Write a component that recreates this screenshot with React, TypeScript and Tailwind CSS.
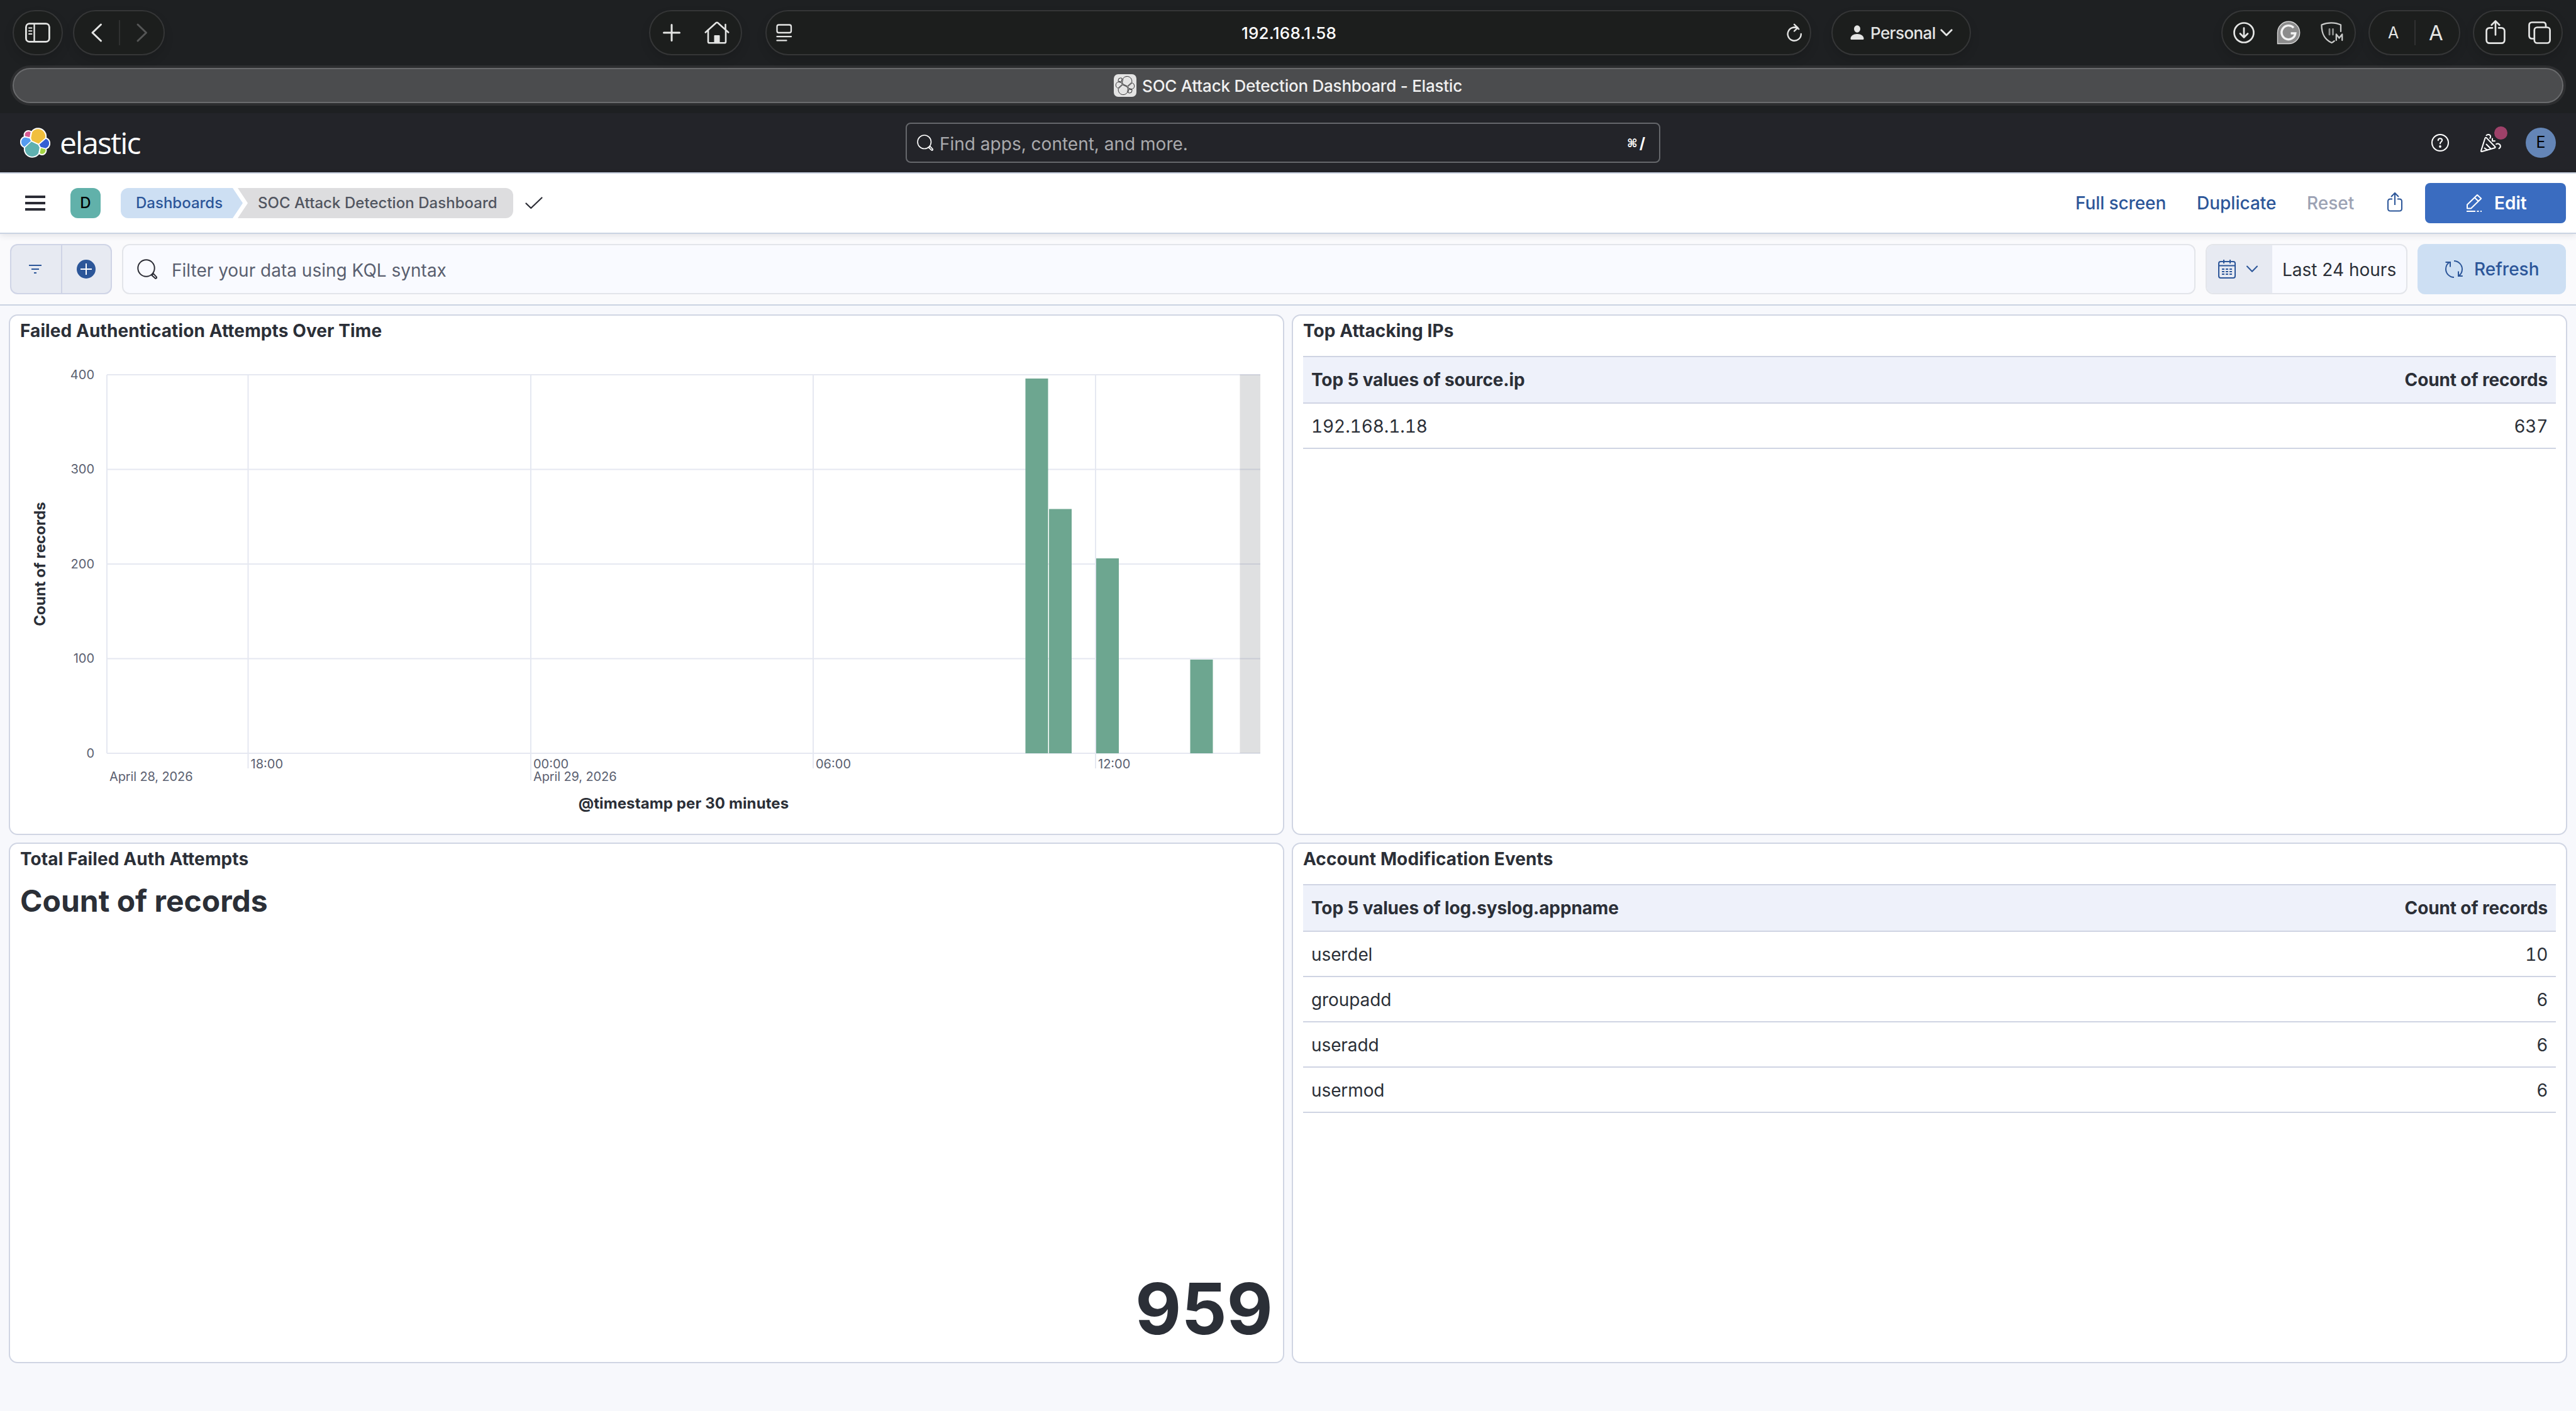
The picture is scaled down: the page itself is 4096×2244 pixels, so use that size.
import type { ReactNode } from 'react';

const LOGO_SHAPES = [
  { color: '#f0bf3d', d: 'M12.58 13.787l7.002 3.211 7.066-6.213a7.849 7.849 0 00.152-1.557c0-4.287-3.464-7.775-7.722-7.775a7.713 7.713 0 00-6.37 3.37l-1.176 6.117 1.048 2.847z' },
  { color: '#5fb0b0', d: 'M5.333 21.228c-.1.52-.15 1.05-.15 1.58 0 4.3 3.48 7.8 7.76 7.8 2.57 0 4.98-1.29 6.42-3.42l1.17-6.1-1.56-2.99-7.03-3.22-6.61 6.35z' },
  { color: '#d75a92', d: 'M5.288 9.067l4.8 1.137L11.14 4.73a3.804 3.804 0 00-2.304-.78A3.83 3.83 0 005 7.78c0 .44.08.88.288 1.287z' },
  { color: '#559cf0', d: 'M4.87 10.214c-2.144.714-3.64 2.793-3.64 5.067 0 2.215 1.364 4.194 3.41 4.98l6.735-6.117-1.236-2.655-5.27-1.275z' },
  { color: '#a3d343', d: 'M20.873 27.198a3.8 3.8 0 002.293.78 3.83 3.83 0 003.83-3.84c0-.44-.077-.87-.227-1.27l-4.79-1.13-1.106 5.46z' },
  { color: '#345fd4', d: 'M21.848 20.563l5.28 1.24c2.144-.714 3.64-2.793 3.64-5.067a5.34 5.34 0 00-3.43-4.97l-6.903 6.08 1.413 2.717z' },
];

function ElasticLogo() {
  return (
    <svg className="w-12 h-12 shrink-0" viewBox="0 0 32 32">
      {LOGO_SHAPES.map((s) => (
        <path key={s.color} d={s.d} fill="#fff" stroke="#fff" strokeWidth="2.6" strokeLinejoin="round" />
      ))}
      {LOGO_SHAPES.map((s) => (
        <path key={s.color} d={s.d} fill={s.color} />
      ))}
    </svg>
  );
}

function Favicon() {
  return (
    <svg className="w-9 h-9 shrink-0" viewBox="0 0 36 36">
      <rect width="36" height="36" rx="7" fill="#e4e4e4" />
      <g transform="translate(2 2)" fill="none" stroke="#1d1d1f" strokeWidth="0.9" strokeLinejoin="round">
        {LOGO_SHAPES.map((s) => (
          <path key={s.color} d={s.d} />
        ))}
      </g>
    </svg>
  );
}

function Pill({ className, children }: { className: string; children: ReactNode }) {
  return (
    <div className={`h-[72px] shrink-0 flex items-center rounded-full border-2 border-[#353637] bg-[#1c1e1d] shadow-[0_8px_16px_rgba(0,0,0,0.12)] ${className}`}>
      {children}
    </div>
  );
}

function SearchIcon({ className }: { className: string }) {
  return (
    <svg className={className} viewBox="0 0 32 32" fill="none" stroke="currentColor" strokeWidth="2" strokeLinejoin="round">
      <circle cx="14.5" cy="14.5" r="13.2" />
      <path d="M23.3 25.7l2.6-2.6 4.6 5c.8.9.8 1.7.2 2.3s-1.5.6-2.3-.1z" />
    </svg>
  );
}

function BrowserToolbar() {
  return (
    <div className="h-[108px] pt-4 flex items-start text-[#e4e5e4]">
      <Pill className="ml-5 w-20 justify-center">
        <svg className="w-10 h-8" viewBox="0 0 40 32" fill="none" stroke="currentColor" strokeWidth="2.8">
          <rect x="1.4" y="1.6" width="37" height="28.8" rx="5.5" />
          <path d="M14.5 2v28" strokeWidth="2.4" />
          <path d="M6 8.5h4.5M6 13.2h4.5M6 18h4.5" strokeWidth="2" strokeLinecap="round" />
        </svg>
      </Pill>
      <Pill className="ml-4 w-[146px] pl-[26px]">
        <svg className="w-5 h-8" viewBox="0 0 20 32" fill="none" stroke="currentColor" strokeWidth="3" strokeLinecap="round" strokeLinejoin="round">
          <path d="M16.5 3L3 16l13.5 13" />
        </svg>
        <div className="ml-[25px] w-0.5 h-10 bg-[#303131]" />
        <svg className="ml-[25px] w-5 h-8 text-[#555656]" viewBox="0 0 20 32" fill="none" stroke="currentColor" strokeWidth="3" strokeLinecap="round" strokeLinejoin="round">
          <path d="M3 3l13.5 13L3 29" />
        </svg>
      </Pill>
      <Pill className="ml-[770px] w-[148px] pl-5">
        <svg className="w-7 h-7" viewBox="0 0 28 28" fill="none" stroke="currentColor" strokeWidth="3" strokeLinecap="round">
          <path d="M14 1.5v25M1.5 14h25" />
        </svg>
        <svg className="ml-[38px] w-10 h-9" viewBox="0 0 40 36" fill="none" stroke="currentColor" strokeWidth="2.6" strokeLinecap="round" strokeLinejoin="round">
          <path d="M1.8 17.5L18.7 2.3c.8-.7 1.8-.7 2.6 0l16.9 15.2" />
          <path d="M6 14v18.2c0 1.3.8 2.1 2.1 2.1h23.8c1.3 0 2.1-.8 2.1-2.1V14M33.5 12V5" />
          <path d="M15.5 34V23.2c0-.8.4-1.2 1.2-1.2h6.6c.8 0 1.2.4 1.2 1.2V34z" fill="currentColor" stroke="none" />
        </svg>
      </Pill>
      <Pill className="ml-[37px] w-[1663px] pl-[15px] pr-[12px]">
        <svg className="w-[26px] h-7" viewBox="0 0 26 28" fill="none" stroke="currentColor" strokeWidth="2.3" strokeLinecap="round">
          <rect x="1.5" y="1.5" width="22.5" height="12.5" rx="2.8" />
          <path d="M1.5 20.2H24M1.5 26.4h15" />
        </svg>
        <span className="ml-[713px] w-[153px] text-center text-[26px] font-medium tracking-[0.25px] text-white whitespace-nowrap">192.168.1.58</span>
        <svg className="ml-auto w-[26px] h-[30px]" viewBox="0 0 26 30" fill="none" stroke="currentColor" strokeWidth="2.4" strokeLinecap="round" strokeLinejoin="round">
          <path d="M20.3 9.3A10.6 10.6 0 1 0 23.8 17" />
          <path d="M13 1.8l5.5 5.3-5.5 5.4" />
          <path d="M18.5 7.1c-2-.9-5-.9-7.5-.3" />
        </svg>
      </Pill>
      <Pill className="ml-8 w-[222px] pl-7">
        <svg className="w-[22px] h-6" viewBox="0 0 22 24" fill="currentColor">
          <ellipse cx="11" cy="6" rx="5" ry="5.8" />
          <path d="M.5 21.4c0-4.2 4.5-7.4 10.5-7.4s10.5 3.2 10.5 7.4c0 1-.7 1.6-1.7 1.6H2.2c-1 0-1.7-.6-1.7-1.6z" />
        </svg>
        <span className="ml-[10px] w-[103px] text-[26px] font-medium tracking-[-0.6px] whitespace-nowrap">Personal</span>
        <svg className="ml-[8px] w-5 h-3" viewBox="0 0 20 12" fill="none" stroke="currentColor" strokeWidth="2.8" strokeLinecap="round" strokeLinejoin="round">
          <path d="M1.8 1.8L10 10l8.2-8.2" />
        </svg>
      </Pill>
      <Pill className="ml-auto w-[214px] pl-4">
        <svg className="w-9 h-9" viewBox="0 0 36 36" fill="none" stroke="currentColor" strokeWidth="2.7" strokeLinecap="round" strokeLinejoin="round">
          <circle cx="18" cy="18" r="15.5" />
          <path d="M18 10.5v14.8M12 19.5l6 6 6-6" />
        </svg>
        <svg className="ml-[34px] w-[38px] h-[38px]" viewBox="0 0 38 38" fill="none">
          <path d="M1.5 36.5V19A17.6 17.6 0 1 1 19 36.5z" fill="#8c8c8c" stroke="#d8d8d8" strokeWidth="1.4" />
          <path d="M27 11.2A11 11 0 1 0 29.8 20h-7.3" stroke="#f2f2f2" strokeWidth="3.4" />
        </svg>
        <svg className="ml-[32px] w-9 h-9" viewBox="0 0 36 36" fill="none" stroke="#c9cac9" strokeWidth="2.3" strokeLinecap="round" strokeLinejoin="round">
          <path d="M32 16V5.5C23 1.2 11 1.2 1.5 5.5c0 13 3.5 23 16 28.5 1.7-.8 3-1.7 4.2-2.8" />
          <path d="M14 12.5v8.5M19.5 12.5v8.5" stroke="#8e8f8e" strokeWidth="2.8" />
          <path d="M24.8 30V20.5l4.7 6 4.7-6V30" />
        </svg>
      </Pill>
      <Pill className="ml-5 w-[146px]">
        <span className="w-[71px] pl-1 text-center text-[25px] leading-10">A</span>
        <div className="w-0.5 h-10 bg-[#303131]" />
        <span className="w-[65px] text-center text-[33px] leading-10">A</span>
      </Pill>
      <Pill className="ml-5 mr-[21px] w-[143px] pl-[18px]">
        <svg className="-mt-0.5 w-8 h-10" viewBox="0 0 32 40" fill="none" stroke="currentColor" strokeWidth="2.7" strokeLinecap="round" strokeLinejoin="round">
          <path d="M11 13.3H6.8c-3.2 0-5.2 2-5.2 5.2v14c0 3.2 2 5.2 5.2 5.2h18.4c3.2 0 5.2-2 5.2-5.2v-14c0-3.2-2-5.2-5.2-5.2H21" />
          <path d="M16 24.5V3M9.7 8.7L16 2.4l6.3 6.3" />
        </svg>
        <svg className="ml-[36px] w-9 h-9" viewBox="0 0 36 36" fill="none" stroke="currentColor" strokeWidth="2.7" strokeLinejoin="round">
          <path d="M9.5 27.5H6c-2.8 0-4.5-1.7-4.5-4.5V6c0-2.8 1.7-4.5 4.5-4.5h17.5C26.3 1.5 28 3.2 28 6v3" />
          <rect x="9.8" y="9.5" width="24.8" height="25" rx="4.5" />
        </svg>
      </Pill>
    </div>
  );
}

function BrowserTab() {
  return (
    <div className="mx-5 h-14 rounded-full border-2 border-[#6a6b6d] bg-[#4b4c4e] ring-4 ring-[#2d2e30] flex items-center justify-center gap-[9px]">
      <Favicon />
      <span className="text-[26px] font-medium text-[#f0f0f0] tracking-[-0.24px] whitespace-nowrap">SOC Attack Detection Dashboard - Elastic</span>
    </div>
  );
}

function ElasticHeader() {
  return (
    <header className="h-24 border-b-2 border-[#cad3e2] bg-[#232429] flex items-center px-8">
      <ElasticLogo />
      <span className="ml-[15px] w-[140px] font-['Open_Sans'] font-normal text-[48px] leading-[60px] tracking-[-1.9px] text-white">elastic</span>
      <div className="ml-[1205px] w-[1200px] h-16 shrink-0 rounded-lg border-2 border-[#65676b] flex items-center pl-4 pr-[22px]">
        <SearchIcon className="w-[26px] h-[26px] text-white" />
        <span className="ml-[10px] pt-[3px] text-[28px] text-[#a9aaad] whitespace-nowrap">Find apps, content, and more.</span>
        <span className="ml-auto pt-0.5 flex items-center gap-[3px] font-bold text-white">
          <span className="font-['DejaVu_Sans'] text-[18px] leading-6">⌘</span>
          <span className="text-[24px] leading-6">/</span>
        </span>
      </div>
      <div className="ml-auto flex items-center">
        <svg className="w-7 h-7 text-white" viewBox="0 0 28 28" fill="none" stroke="currentColor" strokeWidth="2">
          <circle cx="14" cy="14" r="13" />
          <path d="M10.8 10.3c0-1.7 1.3-3 3.2-3s3.2 1.2 3.2 2.8c0 2.4-3.2 2.5-3.2 5.3" strokeLinecap="round" />
          <circle cx="14" cy="20" r="1.9" fill="currentColor" stroke="none" />
        </svg>
        <div className="relative ml-[48px] mr-[38px]">
          <svg className="w-9 h-8 text-white" viewBox="0 0 36 32" fill="none" stroke="currentColor" strokeWidth="2" strokeLinecap="round" strokeLinejoin="round">
            <path d="M9.5 8.5c.8-1 1.5-.9 2.3-.1l13.4 13.8c.8.9.5 1.7-.6 2L4.3 30c-1 .2-1.5-.4-1.2-1.4z" />
            <path d="M8.5 24.5l4.5 3M11.5 18.500l7 7" />
            <path d="M11.5 4.3c1.8-2.2 5.5-1.7 6.5.8.5 1.3.2 2.5-.8 3.7" />
            <path d="M21 9.5v3.8h4" />
            <path d="M27 18.2c2.4-1.7 6.2-.5 6.8 2.6.3 1.8-.4 3.3-2.3 4.3" />
          </svg>
          <div className="absolute left-[24px] -top-[10px] w-[21px] h-[21px] rounded-full bg-[#9e4169]" />
        </div>
        <div className="w-12 h-12 rounded-full bg-[#6485b6] flex items-center justify-center text-[25px] text-black">E</div>
      </div>
    </header>
  );
}

function NavBar() {
  return (
    <nav className="relative z-10 h-24 border-b-2 border-[#cad3e2] bg-white shadow-[0_2px_10px_rgba(40,45,60,0.12)] flex items-center px-4">
      <div className="ml-6 flex flex-col gap-[6px]">
        <div className="w-8 h-1 bg-[#2b2c35]" />
        <div className="w-8 h-1 bg-[#2b2c35]" />
        <div className="w-8 h-1 bg-[#2b2c35]" />
      </div>
      <div className="ml-10 w-12 h-12 rounded-xl bg-[#61b1aa] flex items-center justify-center text-[24px] font-medium text-black">D</div>
      <div className="ml-8 h-12 flex text-[24px] font-medium leading-[48px] whitespace-nowrap">
        <div className="w-[194px] rounded-l-xl bg-[#cddff3] pl-[24px] text-[#2c5699] [clip-path:polygon(0_0,178px_0,100%_50%,178px_100%,0_100%)]">Dashboards</div>
        <div className="-ml-2 w-[438px] rounded-r-xl bg-[#dddddf] pl-[32px] tracking-[0.04px] text-[#515560] [clip-path:polygon(0_0,100%_0,100%_100%,0_100%,16px_50%)]">SOC Attack Detection Dashboard</div>
      </div>
      <svg className="ml-[19px] w-7 h-5" viewBox="0 0 28 20" fill="none" stroke="#2b2c35" strokeWidth="2.2" strokeLinecap="round" strokeLinejoin="round">
        <path d="M1.5 10.5l7.8 7.5L26.5 1.5" />
      </svg>
      <div className="ml-auto flex items-center text-[28px] font-medium text-[#2c5699] whitespace-nowrap">
        <span className="w-[193px] tracking-[-0.1px]">Full screen</span>
        <span className="w-[175px]">Duplicate</span>
        <span className="w-[128px] text-[#9ca2b4]">Reset</span>
        <svg className="mr-[36px] -mt-1 w-6 h-[32px]" viewBox="0 0 24 32" fill="none" stroke="currentColor" strokeWidth="2">
          <path d="M8 11.5H5c-2.5 0-4 1.3-4 3.8v11.4C1 29.2 2.5 30.5 5 30.5h14c2.5 0 4-1.3 4-3.8V15.3c0-2.5-1.5-3.8-4-3.8h-3" />
          <path d="M12 21V2.5M6 8l6-6 6 6" />
        </svg>
        <button className="w-56 h-16 rounded-lg bg-[#3a6cc0] text-white flex items-center pl-[65px]">
          <svg className="w-[26px] h-[30px]" viewBox="0 0 26 30" fill="none" stroke="currentColor" strokeWidth="2" strokeLinejoin="round">
            <path d="M2 23.5v-6L18 2l6.2 5.8L8 23.5zM13.8 6.2l6 5.8" />
            <path d="M1 28h14M17.5 28h3M23 28h2" />
          </svg>
          <span className="ml-[19px] font-semibold">Edit</span>
        </button>
      </div>
    </nav>
  );
}

function FilterBar() {
  return (
    <div className="h-[114px] border-b-2 border-[#cad3e2] bg-[#fafafc] flex items-center px-4 text-[28px] whitespace-nowrap">
      <div className="w-[162px] h-20 rounded-xl border-2 border-[#cfd4e6] bg-[#e7eaf2] flex items-center">
        <div className="w-[79px] flex justify-center">
          <svg className="w-5 h-4 mr-1" viewBox="0 0 20 16" stroke="#2c5699" strokeWidth="2.2">
            <path d="M0 2h20M4 8h12M8 14h4" />
          </svg>
        </div>
        <div className="w-0.5 h-full bg-[#cfd4e6]" />
        <div className="flex-1 flex justify-center">
          <svg className="w-[30px] h-[30px] mr-0.5" viewBox="0 0 30 30">
            <circle cx="15" cy="15" r="15" fill="#2c5699" />
            <path d="M15 6v18M6 15h18" stroke="#fff" strokeWidth="2" />
          </svg>
        </div>
      </div>
      <div className="ml-4 w-[3297px] h-20 rounded-xl border-2 border-[#e3e5ea] bg-[#f9faff] flex items-center pl-[22px]">
        <SearchIcon className="w-8 h-8 text-[#2b2c35]" />
        <span className="ml-[23px] pt-[3px] text-[#5a6070]">Filter your data using KQL syntax</span>
      </div>
      <div className="ml-4 w-[321px] h-20 rounded-xl border-2 border-[#e3e5ea] bg-[#f9faff] overflow-hidden flex items-center">
        <div className="w-[104px] h-full bg-[#e7eaf2] flex items-center pl-[18px] text-[#2c5699]">
          <svg className="w-7 h-[30px]" viewBox="0 0 28 30" fill="none" stroke="currentColor" strokeWidth="2">
            <rect x="1" y="3" width="26" height="26" rx="3" />
            <path d="M1 9.5h26M9 0v6M19 0v6" />
            <path d="M6 15h16M6 19h16M6 23h16" strokeDasharray="4 2" />
          </svg>
          <svg className="ml-[17px] w-[18px] h-3" viewBox="0 0 18 12" fill="none" stroke="currentColor" strokeWidth="2" strokeLinecap="round" strokeLinejoin="round">
            <path d="M1 1.5l8 8.3 8-8.3" />
          </svg>
        </div>
        <span className="ml-4 pt-0.5 text-[#2b2f37]">Last 24 hours</span>
      </div>
      <button className="ml-4 w-[236px] h-20 rounded-xl bg-[#cddff3] text-[#2c5699] font-medium flex items-center pl-11">
        <svg className="w-7 h-7" viewBox="0 0 28 28" fill="none" stroke="currentColor" strokeWidth="2">
          <path d="M14 27C7 27 1 21 1 14c0-4.300 2-8.500 6-11M.5 3H8v7.500" />
          <path d="M14 1c7 0 13 6 13 13 0 4.300-2 8.500-6 11M27.800 25H21v-7.500" />
        </svg>
        <span className="ml-[18px]">Refresh</span>
      </button>
    </div>
  );
}

function Panel({ title, children }: { title: string; children: ReactNode }) {
  return (
    <section className="h-[828px] rounded-[14px] border-2 border-[#d0d5e3] bg-white px-4 flex flex-col">
      <h2 className="h-12 shrink-0 text-[28px] leading-[48px] font-bold tracking-[0.1px] whitespace-nowrap">{title}</h2>
      {children}
    </section>
  );
}

const bars = [
  { x: 1630.5, w: 36, y: 602 },
  { x: 1668, w: 36, y: 809.5 },
  { x: 1743, w: 36, y: 888 },
  { x: 1892.5, w: 36, y: 1049 },
];

const yTicks = [
  { label: '400', y: 596 },
  { label: '300', y: 746.5 },
  { label: '200', y: 897 },
  { label: '100', y: 1047.5 },
  { label: '0', y: 1198 },
];

const xTicks = [
  { label: '18:00', x: 394.5, end: 1222 },
  { label: '00:00', x: 844, end: 1241 },
  { label: '06:00', x: 1293, end: 1222 },
  { label: '12:00', x: 1742, end: 1222 },
];

function AuthChart() {
  return (
    <svg className="-mx-4 w-[2024px] h-[776px] shrink-0" viewBox="16 550 2024 776">
      <g stroke="#e5e8f1" strokeWidth="2">
        {yTicks.map((t) => (
          <line key={t.label} x1="170" x2="2004" y1={t.y} y2={t.y} />
        ))}
        <line x1="170" x2="170" y1="596" y2="1198" />
        {xTicks.map((t) => (
          <line key={t.label} x1={t.x} x2={t.x} y1="596" y2={t.end} />
        ))}
      </g>
      {bars.map((b) => (
        <rect key={b.x} x={b.x} y={b.y} width={b.w} height={1198 - b.y} fill="#6da690" />
      ))}
      <rect x="1971.5" y="595.5" width="32.5" height="602.5" fill="#343741" fillOpacity="0.155" />
      <g fill="#5a6070" fontSize="20">
        {yTicks.map((t) => (
          <text key={t.label} x="150" y={t.y + 6.5} textAnchor="end">{t.label}</text>
        ))}
        {xTicks.map((t) => (
          <text key={t.label} x={t.x + 4} y="1222">{t.label}</text>
        ))}
        <text x="174" y="1242" letterSpacing="-0.12">April 28, 2026</text>
        <text x="848" y="1242" letterSpacing="-0.12">April 29, 2026</text>
      </g>
      <g fill="#2b2f37" fontSize="24" fontWeight="700" textAnchor="middle">
        <text x="1087" y="1286" letterSpacing="0.12">@timestamp per 30 minutes</text>
        <text transform="translate(72 897) rotate(-90)" letterSpacing="0.05">Count of records</text>
      </g>
    </svg>
  );
}

function DataTable({ field, rows }: { field: string; rows: [string, string][] }) {
  return (
    <div className="mt-4 text-[28px] leading-[72px] whitespace-nowrap">
      <div className="h-[76px] border-y-2 border-[#cfd4e3] bg-[#eef1fa] px-[13px] flex justify-between tracking-[-0.14px] font-bold">
        <span>{field}</span>
        <span>Count of records</span>
      </div>
      {rows.map(([name, count]) => (
        <div key={name} className="h-[72px] border-b-2 border-[#cfd4e3] px-[13px] flex justify-between tabular-nums">
          <span className="tracking-[-0.1px]">{name}</span>
          <span className="tracking-[-0.3px]">{count}</span>
        </div>
      ))}
    </div>
  );
}

export default function App() {
  return (
    <div className="w-[4096px] h-[2244px] overflow-hidden bg-[#f7f8fc] font-['Inter',sans-serif] text-[#2b2f37]">
      <div className="h-[180px] bg-[#1e2022]">
        <BrowserToolbar />
        <BrowserTab />
      </div>
      <ElasticHeader />
      <NavBar />
      <FilterBar />
      <main className="pt-[14px] pl-[14px] grid grid-cols-[2028px_2028px] gap-3">
        <Panel title="Failed Authentication Attempts Over Time">
          <AuthChart />
        </Panel>
        <Panel title="Top Attacking IPs">
          <DataTable field="Top 5 values of source.ip" rows={[['192.168.1.18', '637']]} />
        </Panel>
        <Panel title="Total Failed Auth Attempts">
          <div className="text-[48px] leading-[72px] mt-[7px] font-bold">Count of records</div>
          <div className="mt-auto mb-[15px] self-end text-[113px] leading-[140px] font-bold">959</div>
        </Panel>
        <Panel title="Account Modification Events">
          <DataTable
            field="Top 5 values of log.syslog.appname"
            rows={[['userdel', '10'], ['groupadd', '6'], ['useradd', '6'], ['usermod', '6']]}
          />
        </Panel>
      </main>
    </div>
  );
}
